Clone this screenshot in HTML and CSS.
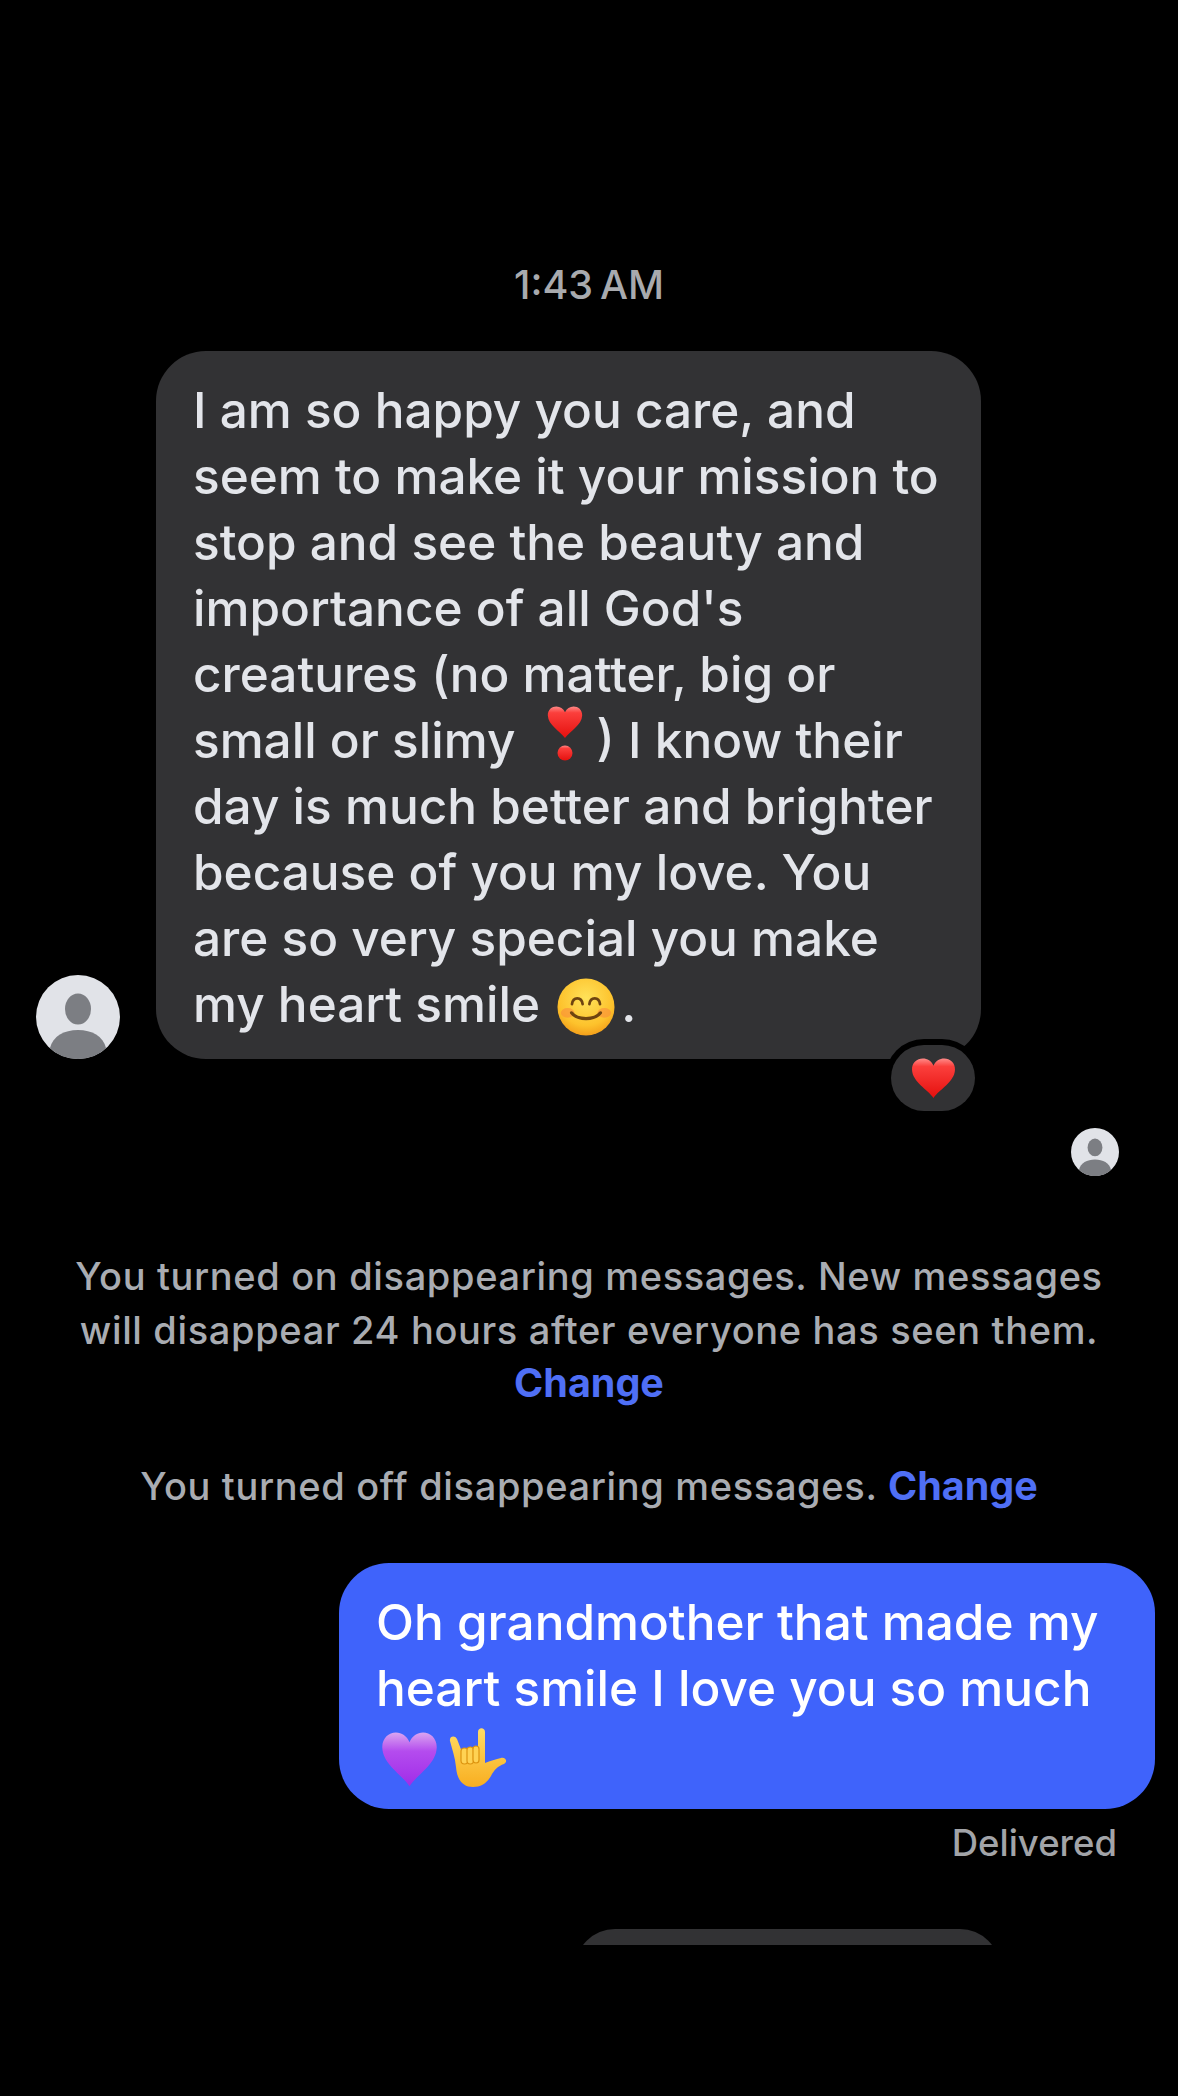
FILE: index.html
```html
<!DOCTYPE html>
<html lang="en">
<head>
<meta charset="utf-8">
<title>Chat</title>
<link rel="stylesheet" href="styles.css">
</head>
<body>
<svg class="defs" width="0" height="0" aria-hidden="true">
  <defs>
    <linearGradient id="red" x1="0" y1="0" x2="0" y2="1">
      <stop offset="0" stop-color="#ff8a88"/>
      <stop offset=".2" stop-color="#fb3f3c"/>
      <stop offset="1" stop-color="#e5100e"/>
    </linearGradient>
    <linearGradient id="purple" x1="0" y1="0" x2="0" y2="1">
      <stop offset="0" stop-color="#dba6f0"/>
      <stop offset=".35" stop-color="#b44cee"/>
      <stop offset="1" stop-color="#a02ce8"/>
    </linearGradient>
    <radialGradient id="face" cx=".5" cy=".35" r=".68">
      <stop offset="0" stop-color="#ffe25a"/>
      <stop offset=".7" stop-color="#fdc22c"/>
      <stop offset="1" stop-color="#f29a18"/>
    </radialGradient>
    <linearGradient id="hand" x1="0" y1="0" x2="0" y2="1">
      <stop offset="0" stop-color="#ffdc64"/>
      <stop offset="1" stop-color="#f8ae20"/>
    </linearGradient>
    <symbol id="heart" viewBox="0 0 44 40">
      <path d="M22 39.500C16 31 1.500 24 1 12 .7 5 6 1 11.500 1c4.500 0 8.500 2.500 10.500 7 2-4.500 6-7 10.500-7C38 1 43.300 5 43 12c-.5 12-15 19-21 27.500z"/>
    </symbol>
    <symbol id="person" viewBox="0 0 84 84">
      <circle cx="42" cy="42" r="42" fill="#e1e3e8"/>
      <ellipse cx="42" cy="34" rx="13" ry="15.500" fill="#7c7e83"/>
      <path d="M14 73c3-12 14-18 28-18s25 6 28 18c-7 7-17 11-28 11s-21-4-28-11z" fill="#7c7e83"/>
    </symbol>
  </defs>
</svg>

<main class="chat">
  <div class="time">1:43&#8201;AM</div>

  <section class="incoming">
    <svg class="avatar" viewBox="0 0 84 84"><use href="#person"/></svg>
    <div class="bubble-wrap">
      <p class="bubble bubble-gray">I am so happy you care, and<br>seem to make it your mission to<br>stop and see the beauty and<br>importance of all God's<br>creatures (no matter, big or<br>small or slimy <svg class="emoji emoji-excl" viewBox="0 0 44 66"><use href="#heart" width="36" height="36" x="4" y="0" fill="url(#red)"/><circle cx="22" cy="49" r="7.500" fill="url(#red)"/></svg>) I know their<br>day is much better and brighter<br>because of you my love. You<br>are so very special you make<br>my heart smile <svg class="emoji emoji-face" viewBox="0 0 60 60"><circle cx="30" cy="30" r="29.500" fill="url(#face)"/><ellipse cx="11" cy="36" rx="7" ry="5" fill="#f9863c" opacity=".55"/><ellipse cx="49" cy="36" rx="7" ry="5" fill="#f9863c" opacity=".55"/><path d="M15.500 27c1-8 10-8 11 0M33.500 27c1-8 10-8 11 0" fill="none" stroke="#6e4410" stroke-width="2.800" stroke-linecap="round"/><path d="M15 36c6 8 24 8 30 0" fill="none" stroke="#6e4410" stroke-width="3.200" stroke-linecap="round"/></svg>.</p>
      <div class="reaction"><svg class="reaction-heart" viewBox="0 0 44 40"><use href="#heart" fill="url(#red)"/></svg></div>
    </div>
  </section>

  <div class="seen"><svg class="avatar-small" viewBox="0 0 84 84"><use href="#person"/></svg></div>

  <p class="notice notice-first">You turned on disappearing messages. New messages<br>will disappear 24 hours after everyone has seen them.<br><a class="link">Change</a></p>
  <p class="notice notice-second">You turned off disappearing messages. <a class="link">Change</a></p>

  <section class="outgoing">
    <p class="bubble bubble-blue">Oh grandmother that made my<br>heart smile I love you so much<br><span class="emoji-line"><svg class="emoji emoji-purple" viewBox="0 0 44 40" preserveAspectRatio="none"><use href="#heart" fill="url(#purple)"/></svg><svg class="emoji emoji-hand" viewBox="0 0 60 60"><path d="M2 14C1 9 7 8 9 12l5 13h16V5c0-5 7-5 7 0v31c5-2 11-4 16-5 5-1 7 4 3 6-6 2-10 6-13 12-4 7-10 11-18 11-11 0-16-8-17-20C7 30 4 22 2 14z" fill="url(#hand)"/><rect x="13" y="21" width="7" height="16" rx="3.500" fill="#ffd253" stroke="#dd940f" stroke-width="1.200"/><rect x="19" y="20" width="6.500" height="17" rx="3.200" fill="#ffd253" stroke="#dd940f" stroke-width="1.200"/><rect x="25" y="19" width="6" height="17" rx="3" fill="#ffd253" stroke="#dd940f" stroke-width="1.200"/></svg></span></p>
    <div class="status">Delivered</div>
  </section>

  <div class="peek"><div class="peek-bubble"></div></div>
</main>
</body>
</html>
```

FILE: styles.css
```css
* { box-sizing: border-box; }

html, body {
  margin: 0;
  background: #000;
}

body {
  font-family: Inter, "Liberation Sans", sans-serif;
  width: 1178px;
  height: 2096px;
  overflow: hidden;
}

.defs { display: block; }

.chat {
  display: flex;
  flex-direction: column;
  padding-top: 264px;
}

.time {
  height: 42px;
  line-height: 42px;
  text-align: center;
  font-size: 39.500px;
  font-weight: 550;
  color: #a8aaae;
}

.incoming {
  display: flex;
  align-items: flex-end;
  gap: 36px;
  margin-top: 45px;
  padding-left: 36px;
}

.avatar { width: 84px; height: 84px; flex: none; }

.bubble-wrap { position: relative; }

.bubble {
  margin: 0;
  font-size: 49.500px;
  line-height: 66px;
  font-weight: 550;
  border-radius: 50px;
  white-space: nowrap;
}

.bubble-gray {
  width: 825px;
  height: 708px;
  padding: 26px 0 0 37px;
  background: #323234;
  color: #e3e5ea;
}

.reaction {
  position: absolute;
  left: 735px;
  bottom: -52px;
  width: 84px;
  height: 66px;
  border-radius: 33px;
  background: #323234;
  box-shadow: 0 0 0 6px #000;
  display: flex;
  align-items: center;
  justify-content: center;
}

.reaction-heart { width: 45px; height: 44px; }

.emoji { display: inline-block; }

.emoji-excl {
  width: 44px;
  height: 66px;
  vertical-align: -1px;
  margin: -20px 10px -11px 14px;
}

.emoji-face {
  width: 58px;
  height: 58px;
  vertical-align: -4px;
  margin: -20px 6px -10px 4px;
}

.seen {
  display: flex;
  justify-content: flex-end;
  margin-top: 69px;
  padding-right: 59px;
}

.avatar-small { width: 48px; height: 48px; }

.notice {
  margin: 0;
  text-align: center;
  font-size: 38px;
  letter-spacing: .65px;
  line-height: 53.500px;
  font-weight: 550;
  color: #a9acb2;
  white-space: nowrap;
}

.notice-first { margin-top: 74px; }

.notice-second { margin-top: 49px; }

.link { color: #4f6ff5; font-size: 39.500px; font-weight: 700; letter-spacing: 0; }

.outgoing {
  display: flex;
  flex-direction: column;
  align-items: flex-end;
  margin-top: 50px;
  padding-right: 23px;
}

.bubble-blue {
  width: 816px;
  height: 246px;
  padding: 26px 0 0 37px;
  background: #3f63fb;
  color: #fff;
}

.emoji-line { display: flex; align-items: flex-end; gap: 10px; height: 66px; padding-left: 5px; }

.emoji-purple { width: 57px; height: 56px; }

.emoji-hand { width: 60px; height: 60px; }

.status {
  margin-top: 14px;
  padding-right: 38px;
  font-size: 36.500px;
  line-height: 40px;
  font-weight: 550;
  color: #a2a4a8;
}

.peek {
  height: 16px;
  overflow: hidden;
  margin: 66px 178px 0 575px;
}

.peek-bubble {
  height: 80px;
  border-radius: 50px;
  background: #323234;
}
```
